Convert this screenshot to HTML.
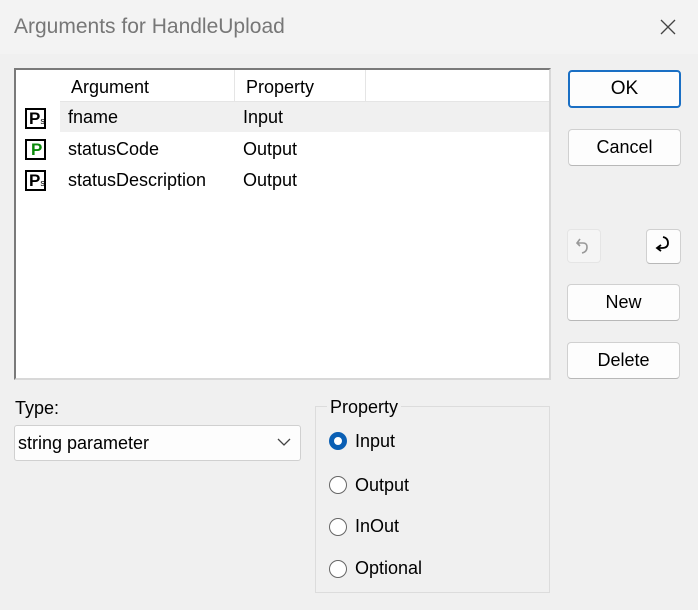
<!DOCTYPE html>
<html><head><style>
body{margin:0;width:698px;height:610px;background:#f0f0f0;font-family:"Liberation Sans",sans-serif;font-size:18px;color:#000;position:relative;overflow:hidden}
.a{position:absolute}
.btn{position:absolute;background:#fdfdfd;border:1px solid #d0d0d0;border-bottom-color:#b8b8b8;border-radius:4px;box-sizing:border-box;text-align:center}
.ic{position:absolute;width:21px;height:21px;border:2px solid #000;box-sizing:border-box;background:#fff;font-weight:bold;font-size:17px;line-height:17px;padding-left:2px}
.ic small{font-size:9px;font-weight:normal}
.rad{position:absolute;width:18px;height:18px;border:1.5px solid #666;border-radius:50%;box-sizing:border-box;background:#fff;left:329px}
</style></head><body>
<div class="a" style="left:0;top:0;width:698px;height:54px;background:#f3f3f3"></div>
<div class="a" style="left:14px;top:15px;color:#777;font-size:21px">Arguments for HandleUpload</div>
<svg class="a" style="left:659px;top:18px" width="18" height="18"><path d="M2 2L16 16M16 2L2 16" stroke="#444" stroke-width="1.3"/></svg>

<div class="a" style="left:14px;top:68px;width:537px;height:312px;background:#fff;border:2px solid #7a7a7a;border-right-color:#d8d8d8;border-bottom-color:#d8d8d8;box-sizing:border-box"></div>
<div class="a" style="left:60px;top:70px;width:489px;height:31px;border-bottom:1px solid #e5e5e5"></div>
<div class="a" style="left:234px;top:70px;width:1px;height:31px;background:#e5e5e5"></div>
<div class="a" style="left:365px;top:70px;width:1px;height:31px;background:#e5e5e5"></div>
<div class="a" style="left:60px;top:102px;width:489px;height:30px;background:#f0f0f0"></div>
<div class="a" style="left:71px;top:77px">Argument</div>
<div class="a" style="left:246px;top:77px">Property</div>
<div class="ic" style="left:25px;top:108px">P<small>s</small></div>
<div class="ic" style="left:25px;top:139px;color:#0a8a0a;padding-left:4px">P</div>
<div class="ic" style="left:25px;top:170px">P<small>s</small></div>
<div class="a" style="left:68px;top:107px">fname</div><div class="a" style="left:243px;top:107px">Input</div>
<div class="a" style="left:68px;top:139px">statusCode</div><div class="a" style="left:243px;top:139px">Output</div>
<div class="a" style="left:68px;top:170px">statusDescription</div><div class="a" style="left:243px;top:170px">Output</div>

<div class="btn" style="left:568px;top:70px;width:113px;height:38px;border:2px solid #1a6fc4;line-height:34px;font-size:19px">OK</div>
<div class="btn" style="left:568px;top:129px;width:113px;height:37px;line-height:35px">Cancel</div>
<div class="btn" style="left:567px;top:229px;width:34px;height:34px;background:#f5f5f5;border-color:#e5e5e5"></div>
<svg class="a" style="left:575px;top:235px" width="18" height="22"><path d="M5 4L2 8L5 11M2 8H8Q12 8 12 12Q12 17 7 18" fill="none" stroke="#999" stroke-width="1.6"/></svg>
<div class="btn" style="left:646px;top:229px;width:35px;height:35px"></div>
<svg class="a" style="left:653px;top:234px" width="22" height="24"><path d="M10 3Q15 4 15 9Q15 14 9 14H5M8 11L4 14L8 17" fill="none" stroke="#000" stroke-width="1.8"/></svg>
<div class="btn" style="left:567px;top:284px;width:113px;height:37px;line-height:35px">New</div>
<div class="btn" style="left:567px;top:342px;width:113px;height:37px;line-height:35px">Delete</div>

<div class="a" style="left:15px;top:398px">Type:</div>
<div class="a" style="left:14px;top:425px;width:287px;height:36px;background:#fdfdfd;border:1px solid #d0d0d0;border-radius:3px;box-sizing:border-box"></div>
<div class="a" style="left:18px;top:433px">string parameter</div>
<svg class="a" style="left:277px;top:437px" width="14" height="10"><path d="M1 2L7 8L13 2" fill="none" stroke="#444" stroke-width="1.3"/></svg>

<div class="a" style="left:315px;top:406px;width:235px;height:187px;border:1px solid #dcdcdc;box-sizing:border-box"></div>
<div class="a" style="left:327px;top:397px;background:#f0f0f0;padding:0 3px">Property</div>
<div class="rad" style="top:432px;border:5px solid #0a5fb4"></div>
<div class="a" style="left:355px;top:431px">Input</div>
<div class="rad" style="top:476px"></div><div class="a" style="left:355px;top:475px">Output</div>
<div class="rad" style="top:518px"></div><div class="a" style="left:355px;top:516px">InOut</div>
<div class="rad" style="top:560px"></div><div class="a" style="left:355px;top:558px">Optional</div>
</body></html>
